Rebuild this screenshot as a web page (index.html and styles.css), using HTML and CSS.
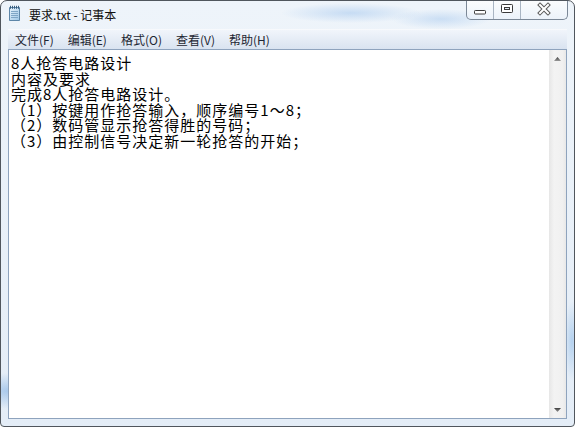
FILE: index.html
```html
<!DOCTYPE html>
<html lang="zh-CN">
<head>
<meta charset="utf-8">
<title>要求.txt - 记事本</title>
<link rel="stylesheet" href="styles.css">
</head>
<body>
<div class="window">
  <div class="titlebar">
    <svg class="app-icon" width="16" height="16" viewBox="0 0 16 16">
      <defs>
        <linearGradient id="pg" x1="0" y1="0" x2="1" y2="1">
          <stop offset="0" stop-color="#e9f4fc"/>
          <stop offset="1" stop-color="#9cc6e6"/>
        </linearGradient>
      </defs>
      <path d="M3.5 2.5 H13.5 V15.5 H3.5 Z" fill="url(#pg)" stroke="#5d86a8"/>
      <path d="M5 6.5 H12 M5 8.5 H12 M5 10.5 H12 M5 12.5 H12" stroke="#7fa6c6" stroke-width="1"/>
      <path d="M4.5 0.8 V3.8 M6.5 0.8 V3.8 M8.5 0.8 V3.8 M10.5 0.8 V3.8 M12.5 0.8 V3.8" stroke="#3a5f80" stroke-width="1"/>
    </svg>
    <span class="title">要求.txt - 记事本</span>
    <div class="controls">
      <div class="btn btn-min">
        <svg width="26" height="18" viewBox="0 0 26 18">
          <rect x="7.5" y="9.5" width="11" height="3.5" rx="0.8" fill="#fff" stroke="#3a3a3a"/>
        </svg>
      </div>
      <div class="btn btn-max">
        <svg width="26" height="18" viewBox="0 0 26 18">
          <rect x="7.5" y="3.5" width="11" height="8" rx="0.8" fill="#fff" stroke="#3a3a3a"/>
          <rect x="10.5" y="6.5" width="5" height="2" fill="#dfe8f2" stroke="#3a3a3a"/>
        </svg>
      </div>
      <div class="btn btn-close">
        <svg width="46" height="18" viewBox="0 0 46 18">
          <path d="M19 4 L27 12 M27 4 L19 12" stroke="#5a5a5a" stroke-width="4" stroke-linecap="square"/>
          <path d="M19 4 L27 12 M27 4 L19 12" stroke="#ffffff" stroke-width="2" stroke-linecap="square"/>
        </svg>
      </div>
    </div>
  </div>
  <div class="menubar">
    <span class="menu-item">文件(F)</span>
    <span class="menu-item">编辑(E)</span>
    <span class="menu-item">格式(O)</span>
    <span class="menu-item">查看(V)</span>
    <span class="menu-item">帮助(H)</span>
  </div>
  <div class="editor">
    <div class="text">
      <div class="line">8人抢答电路设计</div>
      <div class="line">内容及要求</div>
      <div class="line">完成8人抢答电路设计。</div>
      <div class="line">（1）按键用作抢答输入，顺序编号1～8；</div>
      <div class="line">（2）数码管显示抢答得胜的号码；</div>
      <div class="line">（3）由控制信号决定新一轮抢答的开始；</div>
    </div>
    <div class="scrollbar">
      <div class="arrow">
        <svg width="7" height="4" viewBox="0 0 7 4">
          <defs>
            <linearGradient id="ag" x1="0" y1="0" x2="0" y2="1">
              <stop offset="0" stop-color="#3d3d3d"/>
              <stop offset="1" stop-color="#9a9a9a"/>
            </linearGradient>
          </defs>
          <path d="M3.5 0 L7 4 L0 4 Z" fill="url(#ag)"/>
        </svg>
      </div>
      <div class="track"></div>
      <div class="arrow">
        <svg width="7" height="4" viewBox="0 0 7 4">
          <path d="M0 0 L7 0 L3.5 4 Z" fill="url(#ag)"/>
        </svg>
      </div>
    </div>
  </div>
</div>
</body>
</html>
```

FILE: styles.css
```css
html, body {
  margin: 0;
  padding: 0;
  width: 575px;
  height: 427px;
  overflow: hidden;
  background: #ffffff;
}

.window {
  box-sizing: border-box;
  width: 575px;
  height: 427px;
  border: 1px solid #50565d;
  border-radius: 7px 7px 4px 4px;
  padding: 0 7px 7px 7px;
  display: flex;
  flex-direction: column;
  background:
    radial-gradient(ellipse 40px 18px at 8px 390px, rgba(120,170,225,0.55), rgba(120,170,225,0) 100%),
    radial-gradient(ellipse 70px 10px at 350px 12px, rgba(150,190,235,0.45), rgba(150,190,235,0) 100%),
    radial-gradient(ellipse 50px 10px at 440px 18px, rgba(150,190,235,0.4), rgba(150,190,235,0) 100%),
    radial-gradient(ellipse 8px 40px at 571px 340px, rgba(130,180,230,0.5), rgba(130,180,230,0) 100%),
    linear-gradient(#eef4fa, #e4edf7);
  overflow: hidden;
}

.titlebar {
  height: 28px;
  margin: 0 -7px;
  padding-left: 5px;
  display: flex;
  align-items: flex-start;
}

.app-icon {
  margin-top: 4px;
  flex: none;
}

.title {
  margin-left: 7px;
  margin-top: 5px;
  font-family: "Noto Sans CJK SC", "Liberation Sans", sans-serif;
  font-size: 12px;
  line-height: 17px;
  color: #111111;
}

.controls {
  margin-left: auto;
  margin-right: 6px;
  display: flex;
  height: 18px;
  border: 1px solid #7b8897;
  border-top: none;
  border-radius: 0 0 5px 5px;
  overflow: hidden;
  background: linear-gradient(rgba(255,255,255,0.75), rgba(235,242,250,0.6));
}

.btn {
  height: 18px;
  display: flex;
}

.btn-min { width: 26px; }
.btn-max { width: 26px; border-left: 1px solid #a9b5c3; }
.btn-close { width: 46px; border-left: 1px solid #a9b5c3; }

.menubar {
  height: 20px;
  display: flex;
  align-items: center;
  background: linear-gradient(#f1f5fb, #d9e3f0);
  border-top: 1px solid #f7f9fc;
  box-sizing: border-box;
}

.menu-item {
  padding: 0 7px;
  font-family: "Noto Sans CJK SC", "Liberation Sans", sans-serif;
  font-size: 12px;
  line-height: 18px;
  color: #1e2733;
}

.editor {
  flex: 1;
  display: flex;
  background: #ffffff;
  border: 1px solid #8ea3bd;
  min-height: 0;
}

.text {
  flex: 1;
  padding: 5px 0 0 2px;
  font-family: "Noto Sans CJK SC", "Liberation Sans", sans-serif;
  font-size: 15px;
  letter-spacing: 1px;
  line-height: 15.6px;
  color: #000000;
}

.line {
  white-space: pre;
}

.scrollbar {
  width: 17px;
  display: flex;
  flex-direction: column;
  background: linear-gradient(to right, #e6e6e6, #f3f3f3 30%, #f0f0f0 80%, #e8e8e8);
}

.arrow {
  height: 17px;
  display: flex;
  align-items: center;
  justify-content: center;
}

.track {
  flex: 1;
}
```
